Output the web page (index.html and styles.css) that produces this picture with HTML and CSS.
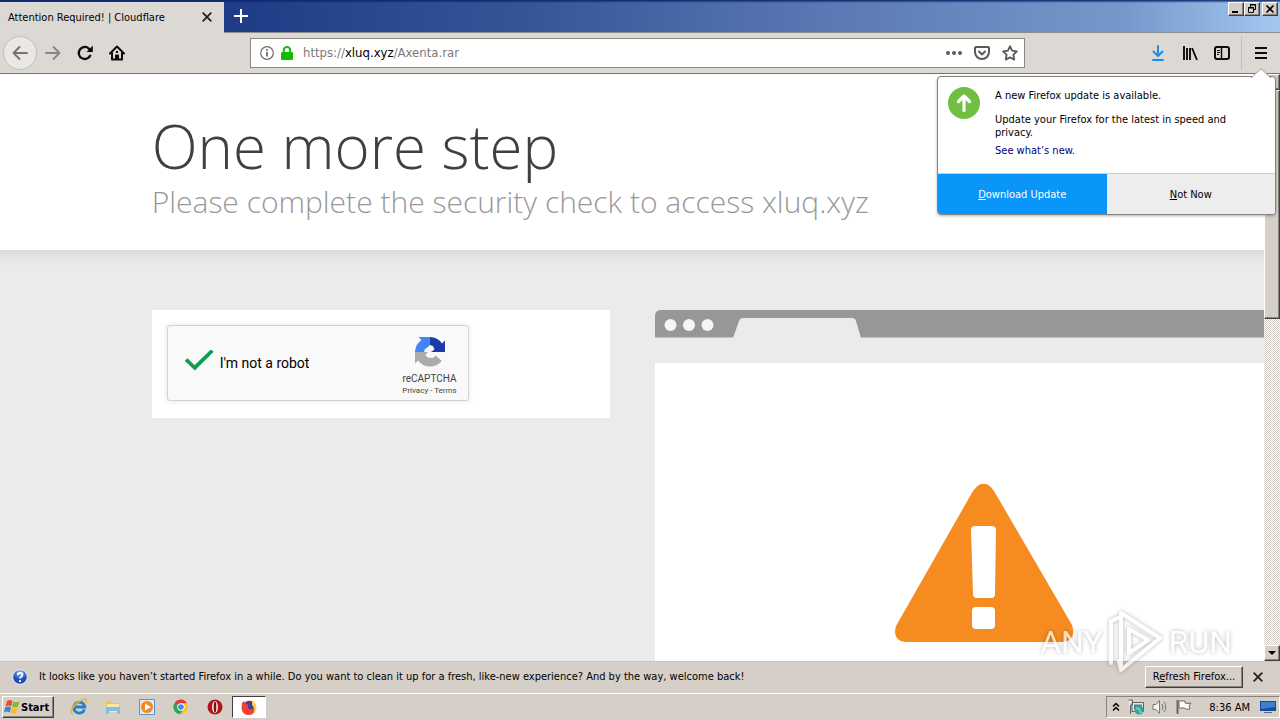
FILE: index.html
```html
<!DOCTYPE html>
<html lang="en">
<head>
<meta charset="utf-8">
<title>Attention Required! | Cloudflare</title>
<link rel="stylesheet" href="styles.css">
</head>
<body>
<header class="titlebar">
  <div class="tab">
    <span class="tab-title">Attention Required! | Cloudflare</span>
    <button class="plain" aria-label="Close tab"><svg width="10" height="10" viewBox="0 0 10 10" fill="none" stroke="#222" stroke-width="1.8"><path d="M.7.7l8.6 8.6M9.3.7L.7 9.3"/></svg></button>
  </div>
  <button class="plain new-tab" aria-label="New tab"><svg width="14" height="14" viewBox="0 0 14 14" stroke="#fff" stroke-width="2"><path d="M7 0v14M0 7h14"/></svg></button>
  <div class="window-buttons">
    <button class="raised win" aria-label="Minimize"><svg width="12" height="10" viewBox="0 0 12 10"><path d="M2 7h6v2H2z"/></svg></button>
    <button class="raised win" aria-label="Restore"><svg width="12" height="10" viewBox="0 0 12 10" fill="none" stroke="#000"><path d="M4.500 3V.5h5v5H8M4 1h6M2.500 3.500h5v5h-5zM2 4h6"/></svg></button>
    <button class="raised win win-close" aria-label="Close"><svg width="12" height="10" viewBox="0 0 12 10" stroke="#000" stroke-width="1.700"><path d="M2.500 1.500l7 7M9.500 1.500l-7 7"/></svg></button>
  </div>
</header>

<nav class="toolbar">
  <div class="nav-buttons">
    <button class="plain tool back" aria-label="Back"><svg width="16" height="16" viewBox="0 0 16 16" fill="none" stroke="#77736f" stroke-width="2" stroke-linecap="round" stroke-linejoin="round"><path d="M15 8H1.500M7.500 2l-6 6 6 6"/></svg></button>
    <button class="plain tool" aria-label="Forward"><svg width="16" height="16" viewBox="0 0 16 16" fill="none" stroke="#8a8784" stroke-width="2" stroke-linecap="round" stroke-linejoin="round"><path d="M1 8h13.500M8.500 2l6 6-6 6"/></svg></button>
    <button class="plain tool" aria-label="Reload"><svg width="16" height="16" viewBox="0 0 16 16" fill="none" stroke="#0c0c0d" stroke-width="2.300"><path d="M13.500 9.800A6 6 0 1 1 12 3.700l1.500 1.500"/><path d="M15.800.6v6.300H9.500z" fill="#0c0c0d" stroke="none"/></svg></button>
    <button class="plain tool" aria-label="Home"><svg width="16" height="16" viewBox="0 0 16 16" fill="none" stroke="#0c0c0d" stroke-width="2" stroke-linecap="round" stroke-linejoin="round"><path d="M1 8.500L8 1.500l7 7M3 8v6.500h10V8M7 14v-3.500h2V14"/><path d="M7 6h2v2H7z" fill="#0c0c0d" stroke="none"/></svg></button>
  </div>
  <div class="urlbar">
    <svg width="14" height="14" viewBox="0 0 14 14" fill="none" stroke="#6d6d6e" stroke-width="1.200"><circle cx="7" cy="7" r="6.300"/><path d="M7 6v4.500M7 3v1.800" stroke-width="1.800"/></svg>
    <svg class="lock" width="12" height="14" viewBox="0 0 12 14"><path d="M2.800 7V4.200a3.200 3.200 0 0 1 6.400 0V7" fill="none" stroke="#12bc00" stroke-width="2"/><rect y="6" width="12" height="8" rx="1.200" fill="#12bc00"/></svg>
    <div class="url" role="textbox" aria-label="Address" contenteditable="true" spellcheck="false">https://<span class="host">xluq.xyz</span>/Axenta.rar</div>
    <button class="plain" aria-label="Page actions"><svg width="16" height="16" viewBox="0 0 16 16" fill="#5a5a5b"><circle cx="2" cy="8" r="2"/><circle cx="8" cy="8" r="2"/><circle cx="14" cy="8" r="2"/></svg></button>
    <button class="plain" aria-label="Save to Pocket"><svg width="16" height="16" viewBox="0 0 16 16" fill="none" stroke="#5a5a5b" stroke-width="2" stroke-linecap="round" stroke-linejoin="round"><path d="M2 2h12q1 0 1 1v4a7 7 0 0 1-14 0V3q0-1 1-1zM5 6.500l3 3 3-3"/></svg></button>
    <button class="plain" aria-label="Bookmark"><svg width="16" height="16" viewBox="0 0 16 16" fill="none" stroke="#5a5a5b" stroke-width="1.800" stroke-linejoin="round"><path d="M8 1.200l2.100 4.400 4.800.7-3.500 3.400.8 4.900L8 12.300l-4.200 2.300.8-4.900L1.100 6.300l4.800-.7z"/></svg></button>
  </div>
  <div class="tools">
    <button class="plain tool" aria-label="Downloads"><svg width="16" height="16" viewBox="0 0 16 16" fill="none" stroke="#1b8cf2" stroke-width="2" stroke-linecap="round" stroke-linejoin="round"><path d="M8 1v9.500M3.500 6.500L8 11l4.500-4.500M3 15h10"/></svg></button>
    <button class="plain tool" aria-label="Library"><svg width="16" height="16" viewBox="0 0 16 16" fill="none" stroke="#0c0c0d" stroke-width="1.900"><path d="M2 1v14M5 3v12M8 3v12M10 3l5 12"/></svg></button>
    <button class="plain tool" aria-label="Sidebars"><svg width="16" height="16" viewBox="0 0 16 16" fill="none" stroke="#0c0c0d"><rect x="1" y="2" width="14" height="12" rx="2" stroke-width="2"/><path d="M7.500 2v12" stroke-width="1.500"/><path d="M3 5.500h3M3 7.500h3M3 9.500h2"/></svg></button>
    <button class="plain tool menu-button" aria-label="Menu"><svg width="14" height="14" viewBox="0 0 14 14" stroke="#0c0c0d" stroke-width="2"><path d="M1 2h12M1 7h12M1 12h12"/></svg></button>
  </div>
</nav>

<div class="viewport">
  <main class="page">
    <section class="page-header">
      <div class="wrapper">
        <h1>One more step</h1>
        <h2>Please complete the security check to access xluq.xyz</h2>
      </div>
    </section>
    <section class="page-body">
      <div class="wrapper columns">
        <div class="captcha-card">
          <div class="captcha">
            <input type="checkbox" id="robot" checked>
            <label for="robot">I'm not a robot</label>
            <div class="brand">
              <svg width="32" height="32" viewBox="0 0 32 32">
                <path d="M31 16V4.500l-3 3A15 15 0 0 0 16 1v8l3 1 1.500 3.500L17 16z" fill="#1c3aa9"/>
                <path d="M16 1H4.500l3 3A15 15 0 0 0 1 16h9l1-3 3-2 2-2z" fill="#4285f4"/>
                <path d="M1 16v11.500l3-3A15 15 0 0 0 27.800 25l-6-5.500-3 2.500-5-.5-2.500-2.500L14 16z" fill="#ababab"/>
              </svg>
              <span class="brand-name">reCAPTCHA</span>
              <span class="legal"><a href="#">Privacy</a> - <a href="#">Terms</a></span>
            </div>
          </div>
        </div>
        <div class="illustration">
          <svg class="frame" width="658" height="28" viewBox="0 0 658 28"><path d="M0 27.500V6q0-6 6-6h646q6 0 6 6v21.500z" fill="#979797"/><path d="M78 28l6-17q1-3 4-3h109q3 0 4 3l5 17z" fill="#ebebeb"/><g fill="#f5f5f5"><circle cx="15.500" cy="15" r="6"/><circle cx="34" cy="15" r="6"/><circle cx="52.500" cy="15" r="6"/></g></svg>
          <div class="frame-page">
            <svg width="180" height="160" viewBox="0 0 180 160"><path d="M79 7q11-15 21 0l78 134q5 15-9 17H11Q-2 156 2 142z" fill="#f68b1f"/><path d="M81 42h17q4 0 4 4l-1 64q0 4-4 4H83q-4 0-4-4l-2-64q0-4 4-4z" fill="#fff"/><rect x="78" y="123" width="23" height="22" rx="4" fill="#fff"/></svg>
          </div>
        </div>
      </div>
    </section>
  </main>
  <div class="scrollbar" aria-hidden="true">
    <div class="raised arrow"></div>
    <div class="raised thumb"></div>
    <div class="track"></div>
    <div class="raised arrow"><svg width="8" height="4" viewBox="0 0 8 4"><path d="M0 0h8L4 4z"/></svg></div>
  </div>
</div>

<div class="notification" role="status">
  <svg width="16" height="16" viewBox="0 0 16 16"><defs><radialGradient id="help" cy=".2"><stop stop-color="#91b5f2"/><stop offset="1" stop-color="#1e4db7"/></radialGradient></defs><circle cx="8" cy="8" r="7.300" fill="url(#help)" stroke="#e8eefa" stroke-width="1"/><path d="M5.700 6.200q0-2.400 2.400-2.400t2.300 2q0 1.200-1.200 1.900T8 9.500M8 11v2" fill="none" stroke="#fff" stroke-width="1.800"/></svg>
  <span class="message">It looks like you haven’t started Firefox in a while. Do you want to clean it up for a fresh, like-new experience? And by the way, welcome back!</span>
  <button class="raised refresh">R<u>e</u>fresh Firefox...</button>
  <button class="plain" aria-label="Dismiss"><svg width="10" height="10" viewBox="0 0 10 10" fill="none" stroke="#222" stroke-width="1.800"><path d="M.7.7l8.600 8.600M9.300.7L.7 9.300"/></svg></button>
</div>

<footer class="taskbar">
  <button class="raised start"><svg width="16" height="16" viewBox="0 0 16 16"><path d="M3 2q3-2 5.500 0L7.300 7.300Q4.500 5.600 1.500 7.200z" fill="#e8502a"/><path d="M9.300 2.400Q12 4 15.500 2.300L14 7.600q-3 1.600-5.900 0z" fill="#7fb833"/><path d="M1.300 8.200q3-1.600 5.800 0L5.700 13.400q-3-1.800-5.700 0z" fill="#3f7fd6"/><path d="M7.900 8.600q3 1.700 5.900 0l-1.500 5.200q-3 1.800-5.800 0z" fill="#f5bc26"/></svg>Start</button>
  <div class="quick">
    <button class="plain task" aria-label="Internet Explorer"><svg width="18" height="18" viewBox="0 0 18 18" fill="none"><path d="M14.500 11.500A5.500 5.500 0 1 1 14.800 9H4.500" stroke="#2381cf" stroke-width="2.800"/><path d="M2.500 16C-.5 14 3 7 9 3.500S18 1 16 5" stroke="#e9b52c" stroke-width="1.500"/></svg></button>
    <button class="plain task" aria-label="Explorer"><svg width="18" height="18" viewBox="0 0 18 18"><path d="M2 3h6l1 2h7v8H2z" fill="#e9c75c"/><path d="M3 6h12v8H3z" fill="#fae9a2"/><path d="M2 9h14v7h-3v-3H5v3H2z" fill="#83bfe0"/></svg></button>
    <button class="plain task" aria-label="Media Player"><svg width="18" height="18" viewBox="0 0 18 18"><path d="M1.500 1.500h15v15h-15z" fill="#d9e9f8" stroke="#5a96ce"/><circle cx="9" cy="9" r="6" fill="#f08a1c"/><path d="M7 5.500l6 3.500-6 3.500z" fill="#fff"/></svg></button>
    <button class="plain task" aria-label="Chrome"><svg width="16" height="16" viewBox="0 0 16 16"><path d="M8 8L1.500 4.200A7 7 0 0 1 14 4.500H8z" fill="#e33b2e"/><path d="M8 8l-6.500-3.800A7 7 0 0 0 7.500 15L11 10z" fill="#2da94f"/><path d="M8 4.500h6a7 7 0 0 1-6.500 10.500L11 10z" fill="#fcc31e"/><circle cx="8" cy="8" r="3.700" fill="#fff"/><circle cx="8" cy="8" r="2.800" fill="#4285f4"/></svg></button>
    <button class="plain task" aria-label="Opera"><svg width="16" height="16" viewBox="0 0 16 16"><circle cx="8" cy="8" r="7.500" fill="#b3131a"/><ellipse cx="8" cy="8" rx="3" ry="6" fill="#f1e8e6"/><ellipse cx="8" cy="8" rx="1.300" ry="5.500" fill="#7b1014"/></svg></button>
    <button class="task active" aria-label="Firefox"><svg width="16" height="16" viewBox="0 0 16 16"><circle cx="8" cy="8.500" r="7" fill="#ff8a16"/><circle cx="8.500" cy="7" r="5" fill="#4537a8"/><path d="M1 4l2-2 1.500 3L8 6 6.500 8q1 3 4.500 2 3-2 1-6 4 3 3 6-2 6-7.500 6T.5 10z" fill="#f3402f"/><path d="M11 1q5 4 4.500 8T12 14.500Q15 9 11 6z" fill="#ffd33c"/></svg></button>
  </div>
  <div class="tray">
    <svg width="8" height="10" viewBox="0 0 8 10" fill="none" stroke="#000" stroke-width="1.500"><path d="M1 4.500l3-3 3 3M1 8.500l3-3 3 3"/></svg>
    <svg class="network" width="16" height="16" viewBox="0 0 16 16"><path d="M.5 1h4v5h-2v9M4 3.500h11.500v9H4z" fill="#e6e6df" stroke="#5b6560"/><path d="M6 5.500h8v5H6z" fill="#4c8496"/><circle cx="11" cy="11" r="4.500" fill="#39a79d"/><path d="M8 9l3 1 2 4" stroke="#bfe9c7" fill="none"/></svg>
    <svg width="16" height="16" viewBox="0 0 16 16" fill="none" stroke="#777"><path d="M1 5.500h3L7.500 1.500v13L4 10.500H1z" fill="#f5f5f5"/><path d="M10 5q2 3 0 6M12 3q3.500 5 0 10" /></svg>
    <svg width="17" height="16" viewBox="0 0 17 16"><path d="M1.500 1v14" stroke="#666" stroke-width="2"/><path d="M3 2h6v2q3 1 6 0l-2 3 1 3q-4 1-6-1H3z" fill="#fff" stroke="#666"/></svg>
    <time>8:36 AM</time>
    <svg width="16" height="14" viewBox="0 0 16 14"><path d="M0 1h16v10H0z" fill="#174b9c"/><path d="M1 2h14v5L1 9z" fill="#3c80d4"/><path d="M4 12h8v1H4z" fill="#526b8c"/></svg>
  </div>
</footer>

<aside class="update" role="dialog" aria-label="Firefox update">
  <svg class="pointer" width="20" height="10" viewBox="0 0 20 10"><path d="M0 10L10 .7 20 10" fill="#fff" stroke="#999"/></svg>
  <div class="update-body">
    <svg width="32" height="32" viewBox="0 0 32 32"><circle cx="16" cy="16" r="16" fill="#70bf41"/><path d="M16 23.500V10M10.500 14.500L16 9l5.500 5.500" fill="none" stroke="#fff" stroke-width="3.200" stroke-linecap="round" stroke-linejoin="round"/></svg>
    <div class="update-text">
      <p>A new Firefox update is available.</p>
      <p class="detail">Update your Firefox for the latest in speed and privacy.</p>
      <a href="#">See what’s new.</a>
    </div>
  </div>
  <div class="update-actions">
    <button class="primary"><u>D</u>ownload Update</button>
    <button><u>N</u>ot Now</button>
  </div>
</aside>

<div class="watermark">
  <span>ANY</span>
  <svg width="58" height="64" viewBox="0 0 58 64" fill="none" stroke="#fff" stroke-width="4" stroke-linejoin="round" stroke-linecap="round"><path d="M14 55V3l39 25L14 60l-2-9M4 53V11l7-3M22 43V19l19 11-19 13"/></svg>
  <span>RUN</span>
</div>
</body>
</html>
```
FILE: styles.css
```css
* { box-sizing: border-box; }
body {
  margin: 0;
  height: 100vh;
  display: flex;
  flex-direction: column;
  overflow: hidden;
  position: relative;
  font: 11px/13px "DejaVu Sans Condensed", "DejaVu Sans", sans-serif;
  color: #000;
  background: #d6cfc8;
}
button { font: inherit; color: inherit; padding: 0; border: 0; }
svg { display: block; flex: none; }
h1, h2, p { margin: 0; font-weight: 300; }
.plain { background: none; display: flex; align-items: center; justify-content: center; }
.raised {
  background: #d6cfc8;
  border: 1px solid;
  border-color: #fff #404040 #404040 #fff;
  box-shadow: inset -1px -1px #88837d;
}

.titlebar {
  flex: none;
  height: 33px;
  display: flex;
  align-items: flex-start;
  border-bottom: 1px solid #8e8d8e;
  background: linear-gradient(180deg, #0a246a 0, transparent 3px),
    linear-gradient(90deg, #1d3a80 0, #203e87 20%, #365699 42%, #5b79b4 65%, #7599cb 88%, #a3c8f0 100%);
}
.tab {
  width: 224px;
  height: 33px;
  margin-top: 2px;
  padding: 0 12px 3px 8px;
  display: flex;
  align-items: center;
  justify-content: space-between;
  background: #dcd8d3;
}
.new-tab { width: 34px; height: 32px; }
.window-buttons { margin-left: auto; display: flex; padding: 2px 2px 0 0; }
.win { width: 16px; height: 14px; display: flex; align-items: center; justify-content: center; }
.win-close { margin-left: 2px; }

.toolbar {
  flex: none;
  height: 41px;
  display: flex;
  align-items: center;
  background: #dcd8d3;
  border-bottom: 1px solid #777574;
}
.nav-buttons { width: 250px; padding-left: 3px; display: flex; align-items: center; }
.tool { width: 32px; height: 34px; }
.back { width: 34px; border: 1px solid #c2beb9; border-radius: 50%; background: #eae8e5; }
.urlbar {
  flex: 1;
  height: 30px;
  padding: 0 6px 0 9px;
  display: flex;
  align-items: center;
  gap: 12px;
  background: #fff;
  border: 1px solid #8a8783;
}
.lock { margin-left: -5px; }
.url { flex: 1; margin-left: -2px; font-size: 13px; line-height: 16px; color: #7a7a7a; outline: 0; }
.host { color: #000; }
.tools { width: 255px; display: flex; align-items: center; justify-content: flex-end; }
.menu-button { width: 39px; margin-left: 3px; border-left: 1px solid #c4c0bc; }

.viewport { flex: 1; min-height: 0; display: flex; }
.page { flex: 1; min-width: 0; overflow: hidden; background: #ebebeb; font-family: "Open Sans", sans-serif; }
.wrapper { width: 76%; margin: 0 auto; }
.page-header { padding: 32px 0; background: #fff; }
h1 { font-size: 60px; line-height: 80px; color: #404040; }
h2 { font-size: 30px; line-height: 32px; color: #999; white-space: nowrap; }
.page-body { padding-top: 60px; background: linear-gradient(#dcdcdc, #ebebeb 16px); }
.columns { display: flex; align-items: flex-start; gap: 45px; }
.captcha-card { flex: none; width: 458px; padding: 15px; background: #fff; }
.captcha {
  width: 302px;
  height: 76px;
  margin-bottom: 2px;
  padding: 0 11px 0 17px;
  display: flex;
  align-items: center;
  background: #f9f9f9;
  border: 1px solid #d3d3d3;
  border-radius: 3px;
  box-shadow: 0 0 4px 1px rgba(0, 0, 0, .08);
  font-family: Roboto, sans-serif;
}
.captcha input {
  appearance: none;
  width: 29px;
  height: 21px;
  margin: 0 6px 6px 0;
  background: #0f9d58;
  clip-path: polygon(0 54%, 10% 42%, 34% 75%, 90% 0, 100% 11%, 35% 100%);
}
.captcha label { font-size: 14px; line-height: 18px; }
.brand { margin-left: auto; padding-top: 5px; display: flex; flex-direction: column; align-items: center; color: #444; }
.brand-name { margin-top: 5px; font-size: 10px; line-height: 12px; }
.legal { font-size: 8px; line-height: 11px; }
.legal a { color: inherit; text-decoration: none; }
.illustration { flex: none; width: 658px; }
.frame-page { margin-top: 25px; padding: 121px 0 120px; display: flex; justify-content: center; background: #fff; }

.scrollbar { width: 16px; flex: none; display: flex; flex-direction: column; background: #ebe8e4; }
.arrow { height: 16px; flex: none; display: flex; align-items: center; justify-content: center; }
.thumb { height: 39%; }
.track { flex: 1; background: repeating-conic-gradient(#d6cfc8 0 25%, #fff 0 50%) 0 0 / 2px 2px; }

.notification {
  flex: none;
  height: 32px;
  padding: 0 17px 2px 12px;
  display: flex;
  align-items: center;
  border-top: 1px solid #c9c4bd;
}
.message { margin-left: 11px; white-space: nowrap; }
.refresh { margin-left: auto; margin-right: 10px; width: 98px; height: 22px; white-space: nowrap; }

.taskbar { flex: none; height: 27px; display: flex; align-items: center; border-top: 1px solid #fff; padding-left: 2px; }
.start { width: 52px; height: 22px; display: flex; align-items: center; gap: 1px; padding-left: 1px; font-weight: bold; }
.quick { display: flex; align-items: center; margin-left: 8px; }
.task { width: 34px; height: 22px; display: flex; align-items: center; justify-content: center; }
.active { background: #fff; border: 1px solid; border-color: #404040 #fff #fff #404040; }
.tray {
  margin-left: auto;
  height: 22px;
  padding: 0 3px 0 5px;
  display: flex;
  align-items: center;
  gap: 8px;
  border: 1px solid;
  border-color: #88837d #fff #fff #88837d;
}
.tray time { margin: 0 2px 0 8px; }

.update {
  position: absolute;
  top: 76px;
  right: 4px;
  width: 339px;
  background: #fff;
  border: 1px solid #85827f;
  border-radius: 4px;
  box-shadow: 0 1px 3px rgba(0, 0, 0, .3);
}
.pointer { position: absolute; top: -9px; right: 4px; }
.update-body { display: flex; gap: 15px; padding: 10px 40px 16px 10px; }
.update-text { padding-top: 2px; }
.detail { margin: 11px 0 5px; }
.update-text a { color: #000080; text-decoration: none; }
.update-actions { display: flex; height: 41px; border-top: 1px solid #ccc; border-radius: 0 0 3px 3px; overflow: hidden; }
.update-actions button { flex: 1; background: #ededed; }
.update-actions .primary { background: #0996f8; color: #fff; }

.watermark {
  position: absolute;
  right: 48px;
  bottom: 46px;
  display: flex;
  align-items: center;
  gap: 4px;
  font: 32px/40px Roboto, sans-serif;
  color: #fff;
  opacity: .7;
  filter: drop-shadow(0 0 2px rgba(0, 0, 0, .4));
  pointer-events: none;
}
```
